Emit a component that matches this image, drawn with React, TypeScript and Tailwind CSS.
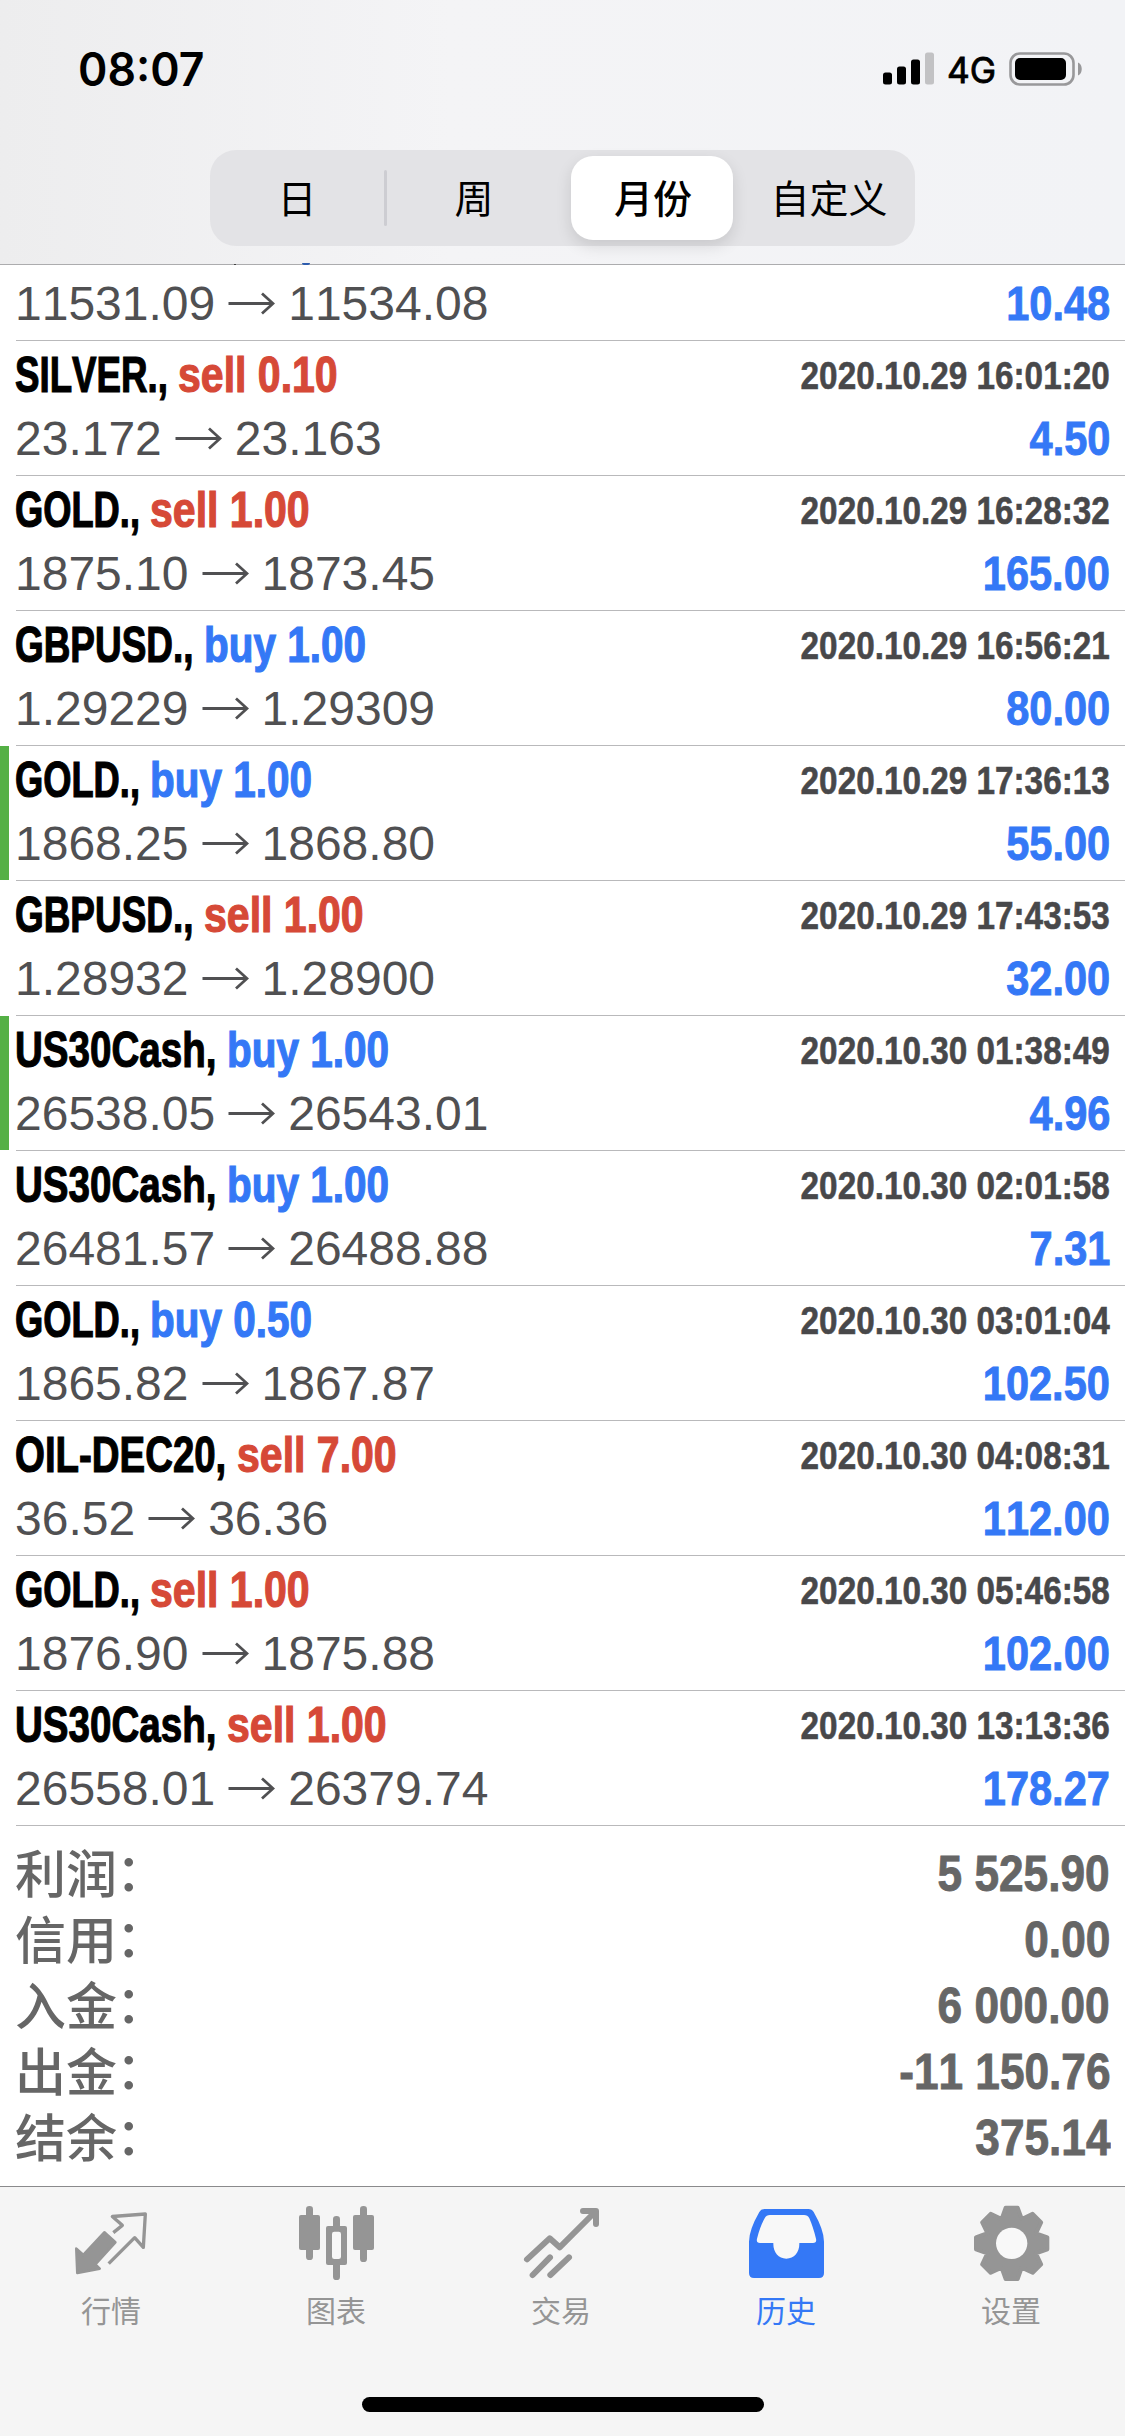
import React, { useLayoutEffect, useRef, useState } from 'react';

interface Deal {
    symbol: string;
    side: 'buy' | 'sell';
    volume: string;
    open: string;
    close: string;
    time: string;
    profit: string;
    marked?: boolean;
}

const deals: Deal[] = [
    { symbol: 'SILVER.', side: 'sell', volume: '0.10', open: '23.172', close: '23.163', time: '2020.10.29 16:01:20', profit: '4.50' },
    { symbol: 'GOLD.', side: 'sell', volume: '1.00', open: '1875.10', close: '1873.45', time: '2020.10.29 16:28:32', profit: '165.00' },
    { symbol: 'GBPUSD.', side: 'buy', volume: '1.00', open: '1.29229', close: '1.29309', time: '2020.10.29 16:56:21', profit: '80.00' },
    { symbol: 'GOLD.', side: 'buy', volume: '1.00', open: '1868.25', close: '1868.80', time: '2020.10.29 17:36:13', profit: '55.00', marked: true },
    { symbol: 'GBPUSD.', side: 'sell', volume: '1.00', open: '1.28932', close: '1.28900', time: '2020.10.29 17:43:53', profit: '32.00' },
    { symbol: 'US30Cash', side: 'buy', volume: '1.00', open: '26538.05', close: '26543.01', time: '2020.10.30 01:38:49', profit: '4.96', marked: true },
    { symbol: 'US30Cash', side: 'buy', volume: '1.00', open: '26481.57', close: '26488.88', time: '2020.10.30 02:01:58', profit: '7.31' },
    { symbol: 'GOLD.', side: 'buy', volume: '0.50', open: '1865.82', close: '1867.87', time: '2020.10.30 03:01:04', profit: '102.50' },
    { symbol: 'OIL-DEC20', side: 'sell', volume: '7.00', open: '36.52', close: '36.36', time: '2020.10.30 04:08:31', profit: '112.00' },
    { symbol: 'GOLD.', side: 'sell', volume: '1.00', open: '1876.90', close: '1875.88', time: '2020.10.30 05:46:58', profit: '102.00' },
    { symbol: 'US30Cash', side: 'sell', volume: '1.00', open: '26558.01', close: '26379.74', time: '2020.10.30 13:13:36', profit: '178.27' },
];

const summary = [
    { label: '利润', value: '5 525.90' },
    { label: '信用', value: '0.00' },
    { label: '入金', value: '6 000.00' },
    { label: '出金', value: '-11 150.76' },
    { label: '结余', value: '375.14' },
];

// condensed widths of the symbol names, trailing comma and space included
const symbolWidth: Record<string, string> = {
    'SILVER.': 'w-[163px]',
    'GOLD.': 'w-[135px]',
    'GBPUSD.': 'w-[189px]',
    'US30Cash': 'w-[212px]',
    'OIL-DEC20': 'w-[222px]',
};

interface FitProps {
    text: string;
    className: string;
}

// squeezes a text horizontally into the width of its box
const Fit: React.FC<FitProps> = ({ text, className }) => {
    const box = useRef<HTMLSpanElement>(null);
    const inner = useRef<HTMLSpanElement>(null);
    const [scale, setScale] = useState(1);

    useLayoutEffect(() => {
        if (box.current && inner.current) {
            setScale(box.current.clientWidth / inner.current.offsetWidth);
        }
    }, [text]);

    return (
        <span ref={box} className={`block shrink-0 ${className}`}>
            <span ref={inner} className="inline-block origin-left whitespace-pre" style={{ transform: `scaleX(${scale})` }}>
                {text}
            </span>
        </span>
    );
};

const Prices = ({ open, close }: { open: string; close: string }) => (
    <div className="flex items-center text-[48px] leading-[50px] text-[#505052]">
        <span>{open}</span>
        <svg className="mr-[13px] ml-[13px] h-[24px] w-[47px]" viewBox="0 0 47 24" fill="none" stroke="#505052" strokeWidth="2.8">
            <path d="M0.5 11.5H45M34 1.5L45 11.5L34 21.5" />
        </svg>
        <span>{close}</span>
    </div>
);

const Profit = ({ value }: { value: string }) => (
    <span className="origin-right scale-x-[.865] text-[48px] leading-[50px] font-bold text-[#3478f6] [-webkit-text-stroke:0.9px]">{value}</span>
);

const DealRow = ({ deal }: { deal: Deal }) => (
    <div className="flex h-[135px]">
        <div className={`mt-px mr-[7px] w-[9px] shrink-0 ${deal.marked ? 'bg-[#54b045]' : ''}`} />
        <div className="flex-1 border-t border-[#b9b9bb] pt-[9px] pr-[15px]">
            <div className="-ml-px flex h-[50px] items-center justify-between">
                <div className="flex text-[50px] leading-[50px] font-bold [-webkit-text-stroke:1.2px]">
                    <Fit text={`${deal.symbol}, `} className={`text-black ${symbolWidth[deal.symbol]}`} />
                    {deal.side === 'buy' ? (
                        <Fit text={`buy ${deal.volume}`} className="w-[162px] text-[#3478f6]" />
                    ) : (
                        <Fit text={`sell ${deal.volume}`} className="w-[160px] text-[#d64937]" />
                    )}
                </div>
                <span className="origin-right scale-x-[.843] text-[39.5px] leading-[48px] font-bold text-[#48484a] [-webkit-text-stroke:0.6px]">
                    {deal.time}
                </span>
            </div>
            <div className="mt-[14px] -ml-px flex items-center justify-between">
                <Prices open={deal.open} close={deal.close} />
                <Profit value={deal.profit} />
            </div>
        </div>
    </div>
);

const StatusBar = () => (
    <div className="flex h-[138px] items-center justify-between pr-[42px] pl-[78px]">
        <div className="font-['Inter'] text-[46px] leading-[50px] font-semibold text-black">
            <Fit text="08:07" className="w-[126px]" />
        </div>
        <div className="flex items-center">
            <svg className="h-[34px] w-[51px]" viewBox="0 0 51 34">
                <rect x="0" y="20.5" width="9" height="12" rx="2.5" />
                <rect x="14" y="14.5" width="9" height="18" rx="2.5" />
                <rect x="28" y="7.5" width="9" height="25" rx="2.5" />
                <rect x="42" y="0.5" width="9" height="32" rx="2.5" fill="#c2c2c4" />
            </svg>
            <div className="ml-[13px] pt-[2px] font-['Inter'] text-[36px] leading-[40px] text-black [-webkit-text-stroke:0.8px]">
                <Fit text="4G" className="w-[49px]" />
            </div>
            <svg className="ml-[13px] h-[34px] w-[74px]" viewBox="0 0 74 34">
                <rect x="1.5" y="1.5" width="63" height="31" rx="9.5" fill="none" stroke="#98989a" strokeWidth="2.6" />
                <rect x="6" y="6" width="51" height="22" rx="5" />
                <path d="M69 10.5C74 12.5 74 21.5 69 23.5Z" fill="#98989a" />
            </svg>
        </div>
    </div>
);

const Tabs = () => (
    <div className="mt-[12px] ml-[210px] flex h-[96px] w-[705px] items-center rounded-[26px] bg-[#e3e3e6] text-[39px] leading-[60px] text-black">
        <div className="w-[174px] pb-[5px] text-center">日</div>
        <div className="h-[56px] w-[3px] rounded-full bg-[#cdcdd2]" />
        <div className="w-[174px] pb-[5px] text-center">周</div>
        <div className="ml-[9px] flex h-[84px] w-[162px] shrink-0 translate-x-[1px] items-center justify-center rounded-[22px] bg-white pb-[5px] pl-[2px] font-medium shadow-[0_6px_16px_rgba(0,0,0,0.12)]">
            月份
        </div>
        <div className="ml-[9px] w-[174px] pb-[5px] pl-[2px] text-center">自定义</div>
    </div>
);

const gear = Array.from({ length: 8 }, (_, i) => {
    const a = (i * Math.PI) / 4;
    return [[-30, -73], [-18, -107], [18, -107]]
        .map(([x, y]) => `${140 + x * Math.cos(a) - y * Math.sin(a)},${145 + x * Math.sin(a) + y * Math.cos(a)}`)
        .join(' ');
}).join(' ');

const QuotesIcon = () => (
    <svg className="size-[96px]" viewBox="0 0 288 288" strokeLinejoin="round">
        <path d="M34 161L55 180L118 112L151 142L91 208L104 221L37 234Z" fill="#959595" stroke="#959595" strokeWidth="8" />
        <path d="M145 113L172 91L142 64.500L241 57L235 157L209 128L131 206" fill="none" stroke="#959595" strokeWidth="10" />
    </svg>
);

const ChartIcon = () => (
    <svg className="size-[96px]" viewBox="0 0 288 288" fill="#959595">
        <rect x="27" y="60" width="63" height="105" rx="6" />
        <rect x="48" y="33" width="21" height="162" rx="10" />
        <rect x="108" y="93" width="63" height="117" rx="6" />
        <rect x="129" y="63" width="21" height="192" rx="10" />
        <rect x="126" y="110" width="27" height="82" rx="7" fill="#f8f8f8" />
        <rect x="189" y="60" width="63" height="105" rx="6" />
        <rect x="210" y="33" width="21" height="168" rx="10" />
    </svg>
);

const TradeIcon = () => (
    <svg className="size-[96px]" viewBox="0 0 288 288" fill="none" stroke="#959595" strokeWidth="18" strokeLinecap="round" strokeLinejoin="round">
        <path d="M36 193L104 130L134 157L240 51" />
        <path d="M204 48H243V87" />
        <path d="M53 240L105 187M106 240L162 187" />
    </svg>
);

const HistoryIcon = () => (
    <svg className="size-[96px]" viewBox="0 0 288 288">
        <path
            d="M74 42H205Q216 42 221 51Q252 105 252 140V234Q252 249 237 249H42Q27 249 27 234V140Q27 105 58 51Q63 42 74 42Z"
            fill="#3478f6"
        />
        <path
            d="M90 60H192Q203 60 208 70Q219 95 228 131Q231 144 219 144H178C179 172 163 191 139 191C115 191 99 172 100 144H60Q48 144 51 131Q60 95 74 70Q79 60 90 60Z"
            fill="#f8f8f8"
        />
    </svg>
);

const SettingsIcon = () => (
    <svg className="size-[96px]" viewBox="0 0 288 288">
        <polygon points={gear} fill="#959595" stroke="#959595" strokeWidth="12" strokeLinejoin="round" />
        <circle cx="140" cy="145" r="47" fill="#f8f8f8" />
    </svg>
);

const navItems = [
    { label: '行情', icon: <QuotesIcon /> },
    { label: '图表', icon: <ChartIcon /> },
    { label: '交易', icon: <TradeIcon /> },
    { label: '历史', icon: <HistoryIcon />, active: true },
    { label: '设置', icon: <SettingsIcon /> },
];

const App: React.FC = () => {
    return (
        <div lang="zh-CN" className="flex h-[2436px] w-[1125px] flex-col overflow-hidden bg-white font-['Noto_Sans_CJK_SC',sans-serif]">
            <header className="relative h-[265px] border-b border-[#acacae] bg-linear-to-r from-[#ededee] via-[#f4f4f6] via-40% to-[#f2f3f6]">
                <StatusBar />
                <Tabs />
                {/* tips of the row that is scrolled under the bar */}
                <span className="absolute -bottom-px left-[234px] h-px w-[2px] bg-[#444]" />
                <span className="absolute -bottom-px left-[302px] h-[2px] w-[8px] rounded-b-full bg-[#2c5cae]" />
            </header>

            <main className="font-['Liberation_Sans','Noto_Sans_CJK_SC',sans-serif] [font-kerning:none]">
                <div className="flex h-[75px] items-start justify-between pt-[14px] pr-[15px] pl-[15px]">
                    <Prices open="11531.09" close="11534.08" />
                    <Profit value="10.48" />
                </div>
                {deals.map((deal) => (
                    <DealRow key={deal.time} deal={deal} />
                ))}
                <div className="ml-[16px] h-[361px] border-t border-[#b9b9bb] pt-[15px] pr-[15px]">
                    {summary.map((item) => (
                        <div key={item.label} className="-ml-px flex h-[66px] items-center justify-between text-[#666]">
                            <div className="flex pt-[3px] text-[51px] leading-[60px] font-medium">
                                <span>{item.label}</span>
                                <span className="-mt-[2px] -ml-[1px]">：</span>
                            </div>
                            <span className="origin-right scale-x-[.875] text-[50.5px] leading-[66px] font-bold [-webkit-text-stroke:0.9px]">
                                {item.value}
                            </span>
                        </div>
                    ))}
                </div>
            </main>

            <footer className="flex h-[250px] flex-col border-t border-[#8a8a8c] bg-[#f5f5f5]">
                <nav className="grid grid-cols-5 pt-[8px]">
                    {navItems.map((item) => (
                        <div key={item.label} className="flex flex-col items-center">
                            {item.icon}
                            <span className={`mt-[-4px] -ml-[3px] text-[30px] leading-[44px] ${item.active ? 'text-[#3478f6]' : 'text-[#959595]'}`}>
                                {item.label}
                            </span>
                        </div>
                    ))}
                </nav>
                <div className="mx-auto mt-auto mb-[24px] h-[15px] w-[402px] rounded-full bg-black" />
            </footer>
        </div>
    );
};

export default App;
